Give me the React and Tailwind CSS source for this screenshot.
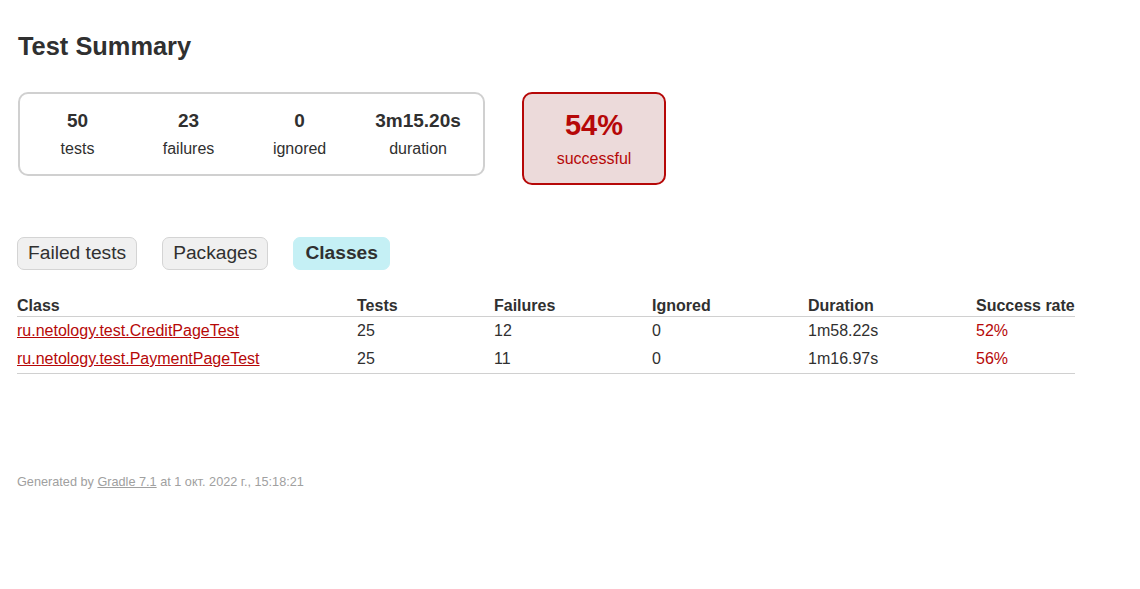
import React from 'react'

const counters = [
  { value: '50', label: 'tests', w: 'w-[112px]' },
  { value: '23', label: 'failures', w: 'w-[112px]' },
  { value: '0', label: 'ignored', w: 'w-[112px]' },
  { value: '3m15.20s', label: 'duration', w: 'w-[127px]' },
]

const rows = [
  { name: 'ru.netology.test.CreditPageTest', tests: '25', failures: '12', ignored: '0', duration: '1m58.22s', rate: '52%' },
  { name: 'ru.netology.test.PaymentPageTest', tests: '25', failures: '11', ignored: '0', duration: '1m16.97s', rate: '56%' },
]

export default function App() {
  return (
    <div className="min-h-screen bg-white pl-[17px] pt-[31px] text-[16px] text-[#303030]" style={{ fontFamily: '"Liberation Sans", Arial, sans-serif' }}>
      {/* heading */}
      <h1 className="text-[25.4px] font-bold leading-[30px] pl-px">Test Summary</h1>

      {/* summary boxes */}
      <div className="flex items-start mt-[31px] ml-px">
        <div className="flex border-2 border-[#d0d0d0] rounded-[10px] px-[2px] w-[467px]">
          {counters.map((c) => (
            <div key={c.label} className={`${c.w} pt-[16px] pb-[16px] text-center`}>
              <div className="text-[19px] font-bold leading-[22px] mb-[8px]">{c.value}</div>
              <div className="leading-[18px]">{c.label}</div>
            </div>
          ))}
        </div>
        <div className="ml-[37px] w-[144px] h-[93px] border-2 border-[#b60808] bg-[#ecdada] rounded-[10px] text-center text-[#b60808] pt-[15px]">
          <div className="text-[29px] font-bold leading-[32px] mb-[9px]">54%</div>
          <div className="leading-[18px]">successful</div>
        </div>
      </div>

      {/* tabs */}
      <div className="flex gap-[25px] mt-[52px]">
        <div className="border border-[#d4d4d4] bg-[#f0f0f0] rounded-[7px] px-[10px] pt-[4px] pb-[6px] text-[19.2px] leading-[21px]">Failed tests</div>
        <div className="border border-[#d4d4d4] bg-[#f0f0f0] rounded-[7px] px-[10px] pt-[4px] pb-[6px] text-[19.2px] leading-[21px]">Packages</div>
        <div className="border border-[#c5f0f5] bg-[#c5f0f5] rounded-[7px] px-[11px] pt-[4px] pb-[6px] text-[19.2px] leading-[21px] font-bold">Classes</div>
      </div>

      {/* classes table */}
      <div className="w-[1058px] mt-[26px]">
        <div className="grid grid-cols-[340px_137px_158px_156px_168px_99px] h-[21px] pt-px leading-[18px] font-bold border-b border-[#d0d0d0]">
          <div>Class</div>
          <div>Tests</div>
          <div>Failures</div>
          <div>Ignored</div>
          <div>Duration</div>
          <div>Success rate</div>
        </div>
        <div className="border-b border-[#d0d0d0]">
          {rows.map((r) => (
            <div key={r.name} className="grid grid-cols-[340px_137px_158px_156px_168px_99px] h-[28px] pt-[5px] leading-[18px]">
              <div><a href="#" className="text-[#b60808] underline">{r.name}</a></div>
              <div>{r.tests}</div>
              <div>{r.failures}</div>
              <div>{r.ignored}</div>
              <div>{r.duration}</div>
              <div className="text-[#b60808]">{r.rate}</div>
            </div>
          ))}
        </div>
      </div>

      {/* footer */}
      <div className="mt-[101px] text-[12.7px] leading-[14px] text-[#a0a0a0]">
        Generated by <a href="#" className="underline text-[#a0a0a0]">Gradle 7.1</a> at 1 окт. 2022 г., 15:18:21
      </div>
    </div>
  )
}
